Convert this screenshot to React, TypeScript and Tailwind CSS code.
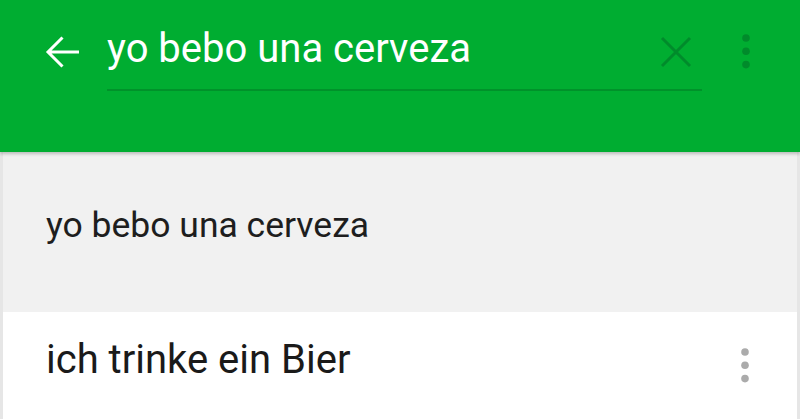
function Dots({ className }: { className: string }) {
  return (
    <svg width="10" height="36" viewBox="0 0 10 36" className={className}>
      <circle cx="5" cy="5" r="3.8" fill="currentColor" />
      <circle cx="5" cy="18.3" r="3.8" fill="currentColor" />
      <circle cx="5" cy="31.6" r="3.8" fill="currentColor" />
    </svg>
  )
}

export default function App() {
  return (
    <div className="flex h-[419px] w-[800px] flex-col overflow-hidden bg-white font-['Roboto',sans-serif]">
      <header className="relative z-10 h-[152px] shrink-0 bg-[#00ad31] shadow-[0_2px_3px_rgba(0,0,0,0.22)]">
        <div className="flex items-start pt-[29px]">
          {/* back arrow */}
          <svg width="36" height="36" viewBox="0 0 36 36" className="ml-[44px] mt-[5px] text-white">
            <path
              d="M35 18H4M18.5 3.5L4 18l14.5 14.5"
              fill="none"
              stroke="currentColor"
              strokeWidth="3"
            />
          </svg>
          <div className="ml-[27px] flex h-[62px] w-[595px] items-start border-b-2 border-[#00922a]">
            <span className="flex-1 text-[40px] leading-[40px] text-white">yo bebo una cerveza</span>
            <svg width="32" height="32" viewBox="0 0 32 32" className="mr-[10px] mt-[7px] text-[#008b2b]">
              <path d="M2 2l28 28M30 2L2 30" fill="none" stroke="currentColor" strokeWidth="3" />
            </svg>
          </div>
          <Dots className="ml-[39px] mt-[4px] text-[#008b2b]" />
        </div>
      </header>
      <main className="flex-1 border-x-[3px] border-[#e6e6e6]">
        <div className="h-[160px] bg-[#f1f1f1] pl-[43px] pt-[56px] text-[35.5px] leading-[35.5px] text-[#1e1e1e]">
          yo bebo una cerveza
        </div>
        <div className="flex items-start justify-between pl-[43px] pr-[47px]">
          <span className="mt-[28px] text-[40px] leading-[40px] text-[#1a1a1a]">ich trinke ein Bier</span>
          <Dots className="mt-[35px] text-[#ababab]" />
        </div>
      </main>
    </div>
  )
}
